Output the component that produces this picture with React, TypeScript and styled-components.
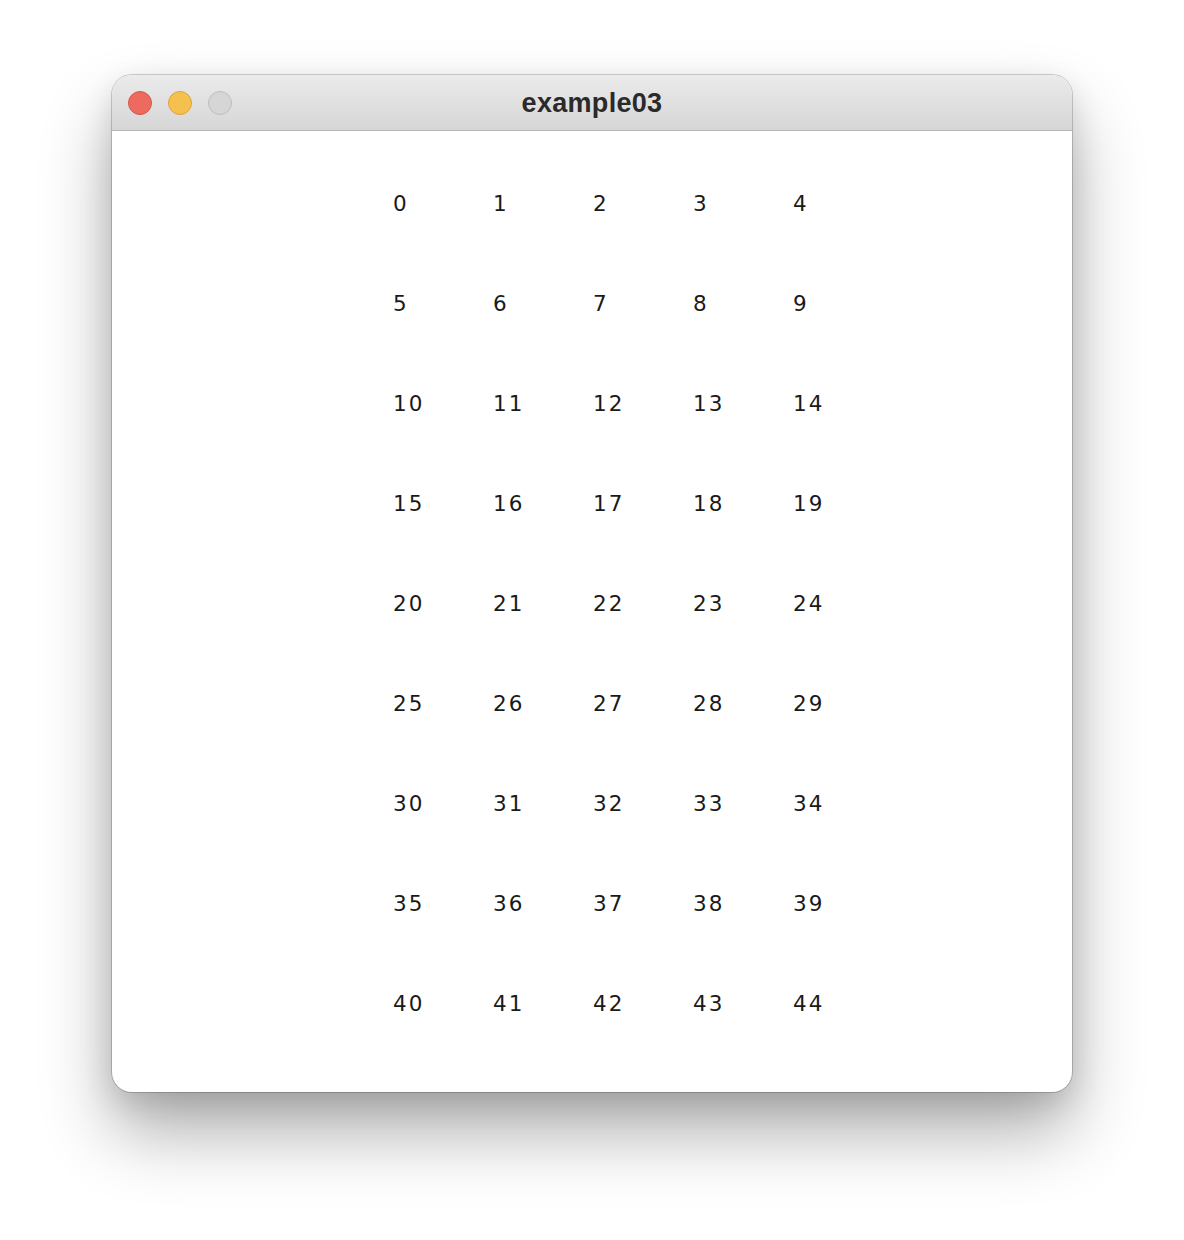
import styled, { createGlobalStyle } from 'styled-components'

const GlobalStyle = createGlobalStyle`
  html, body {
    margin: 0;
    padding: 0;
    background: #ffffff;
  }
  body {
    font-family: 'DejaVu Sans', 'Liberation Sans', sans-serif;
  }
`

const Page = styled.div`
  width: 1184px;
  height: 1240px;
  padding: 75px 0 0 112px;
  box-sizing: border-box;
`

const Window = styled.div`
  width: 960px;
  height: 1017px;
  border-radius: 20px;
  background: #ffffff;
  overflow: hidden;
  display: flex;
  flex-direction: column;
  box-shadow:
    0 0 0 1px rgba(0, 0, 0, 0.18),
    0 40px 70px rgba(0, 0, 0, 0.32),
    0 10px 30px rgba(0, 0, 0, 0.12);
`

const TitleBar = styled.div`
  height: 56px;
  flex: none;
  position: relative;
  display: flex;
  align-items: center;
  justify-content: center;
  padding-top: 2px;
  box-sizing: border-box;
  background: linear-gradient(#ebebeb, #d6d6d6);
  border-bottom: 1px solid #b4b4b4;
`

const Lights = styled.div`
  position: absolute;
  left: 16px;
  top: 16px;
  display: flex;
  gap: 16px;
`

const Light = styled.span<{ $fill: string; $edge: string }>`
  width: 22px;
  height: 22px;
  border-radius: 50%;
  background: ${p => p.$fill};
  border: 1px solid ${p => p.$edge};
`

const Title = styled.div`
  font-family: 'Liberation Sans', Arial, sans-serif;
  font-weight: 700;
  font-size: 27px;
  color: #2a2a2a;
  letter-spacing: 0.3px;
`

const Content = styled.div`
  flex: 1;
  padding: 61px 0 0 281px;
`

const Grid = styled.div`
  display: grid;
  grid-template-columns: repeat(5, 100px);
  grid-auto-rows: 100px;
`

const Cell = styled.div`
  font-family: 'DejaVu Sans', sans-serif;
  font-size: 21.5px;
  line-height: 24px;
  letter-spacing: 2px;
  color: #1a1a1a;
`

const numbers = Array.from({ length: 45 }, (_, i) => i)

export default function App() {
  return (
    <>
      <GlobalStyle />
      <Page>
        <Window>
          <TitleBar>
            <Lights>
              <Light $fill="#ee6a5f" $edge="#d3564b" />
              <Light $fill="#f6c04f" $edge="#d9a43a" />
              <Light $fill="#d6d6d6" $edge="#bdbdbd" />
            </Lights>
            <Title>example03</Title>
          </TitleBar>
          <Content>
            <Grid>
              {numbers.map(n => (
                <Cell key={n}>{n}</Cell>
              ))}
            </Grid>
          </Content>
        </Window>
      </Page>
    </>
  )
}
